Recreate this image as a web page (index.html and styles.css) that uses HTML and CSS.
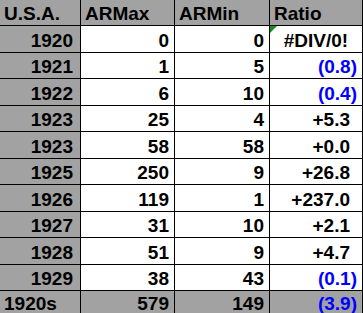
FILE: index.html
```html
<!DOCTYPE html>
<html>
<head>
<meta charset="utf-8">
<link rel="stylesheet" href="styles.css">
</head>
<body>
<div class="sheet">
  <div class="c hd">U.S.A.</div><div class="c hd">ARMax</div><div class="c hd">ARMin</div><div class="c hd">Ratio</div>

  <div class="c yr">1920</div><div class="c n">0</div><div class="c n">0</div><div class="c err">#DIV/0!</div>
  <div class="c yr">1921</div><div class="c n">1</div><div class="c n">5</div><div class="c n neg">(0.8)</div>
  <div class="c yr">1922</div><div class="c n">6</div><div class="c n">10</div><div class="c n neg">(0.4)</div>
  <div class="c yr">1923</div><div class="c n">25</div><div class="c n">4</div><div class="c n pos">+5.3</div>
  <div class="c yr">1923</div><div class="c n">58</div><div class="c n">58</div><div class="c n pos">+0.0</div>
  <div class="c yr">1925</div><div class="c n">250</div><div class="c n">9</div><div class="c n pos">+26.8</div>
  <div class="c yr">1926</div><div class="c n">119</div><div class="c n">1</div><div class="c n pos">+237.0</div>
  <div class="c yr">1927</div><div class="c n">31</div><div class="c n">10</div><div class="c n pos">+2.1</div>
  <div class="c yr">1928</div><div class="c n">51</div><div class="c n">9</div><div class="c n pos">+4.7</div>
  <div class="c yr">1929</div><div class="c n">38</div><div class="c n">43</div><div class="c n neg">(0.1)</div>

  <div class="c tot lab">1920s</div><div class="c tot n">579</div><div class="c tot n">149</div><div class="c tot n neg">(3.9)</div>
</div>
</body>
</html>
```
FILE: styles.css
```css
html, body {
  margin: 0;
  padding: 0;
  background: #ffffff;
}
.sheet {
  display: grid;
  grid-template-columns: 81px 94px 95px 93px;
  grid-template-rows: 26px repeat(10, 26.5px) 30px;
  width: 363px;
  height: 313px;
  overflow: hidden;
  font-family: "Liberation Sans", Arial, sans-serif;
  font-weight: bold;
  font-size: 19px;
  line-height: 20px;
  color: #000;
}
.c {
  box-sizing: border-box;
  border-right: 1px solid #000;
  border-bottom: 1px solid #000;
  display: flex;
  align-items: flex-end;
  padding: 0 4px 1px 4px;
  background: #fff;
  white-space: nowrap;
}
.c:nth-child(4n+1) {
  border-right-width: 1px;
}
.hd {
  background: #a2a2a2;
  justify-content: flex-start;
}
.yr {
  background: #a2a2a2;
  justify-content: flex-end;
  padding-right: 7px;
}
.n {
  justify-content: flex-end;
  padding-right: 5px;
}
.pos {
  padding-right: 12px;
}
.neg {
  color: #0000ff;
}
.err {
  justify-content: center;
  position: relative;
}
.err::before {
  content: "";
  position: absolute;
  left: 0;
  top: 0;
  width: 0;
  height: 0;
  border-top: 7px solid #1b8c1b;
  border-right: 7px solid transparent;
}
.tot {
  background: #a2a2a2;
  align-items: flex-start;
  padding-top: 3px;
}
.lab {
  justify-content: flex-start;
}
```
